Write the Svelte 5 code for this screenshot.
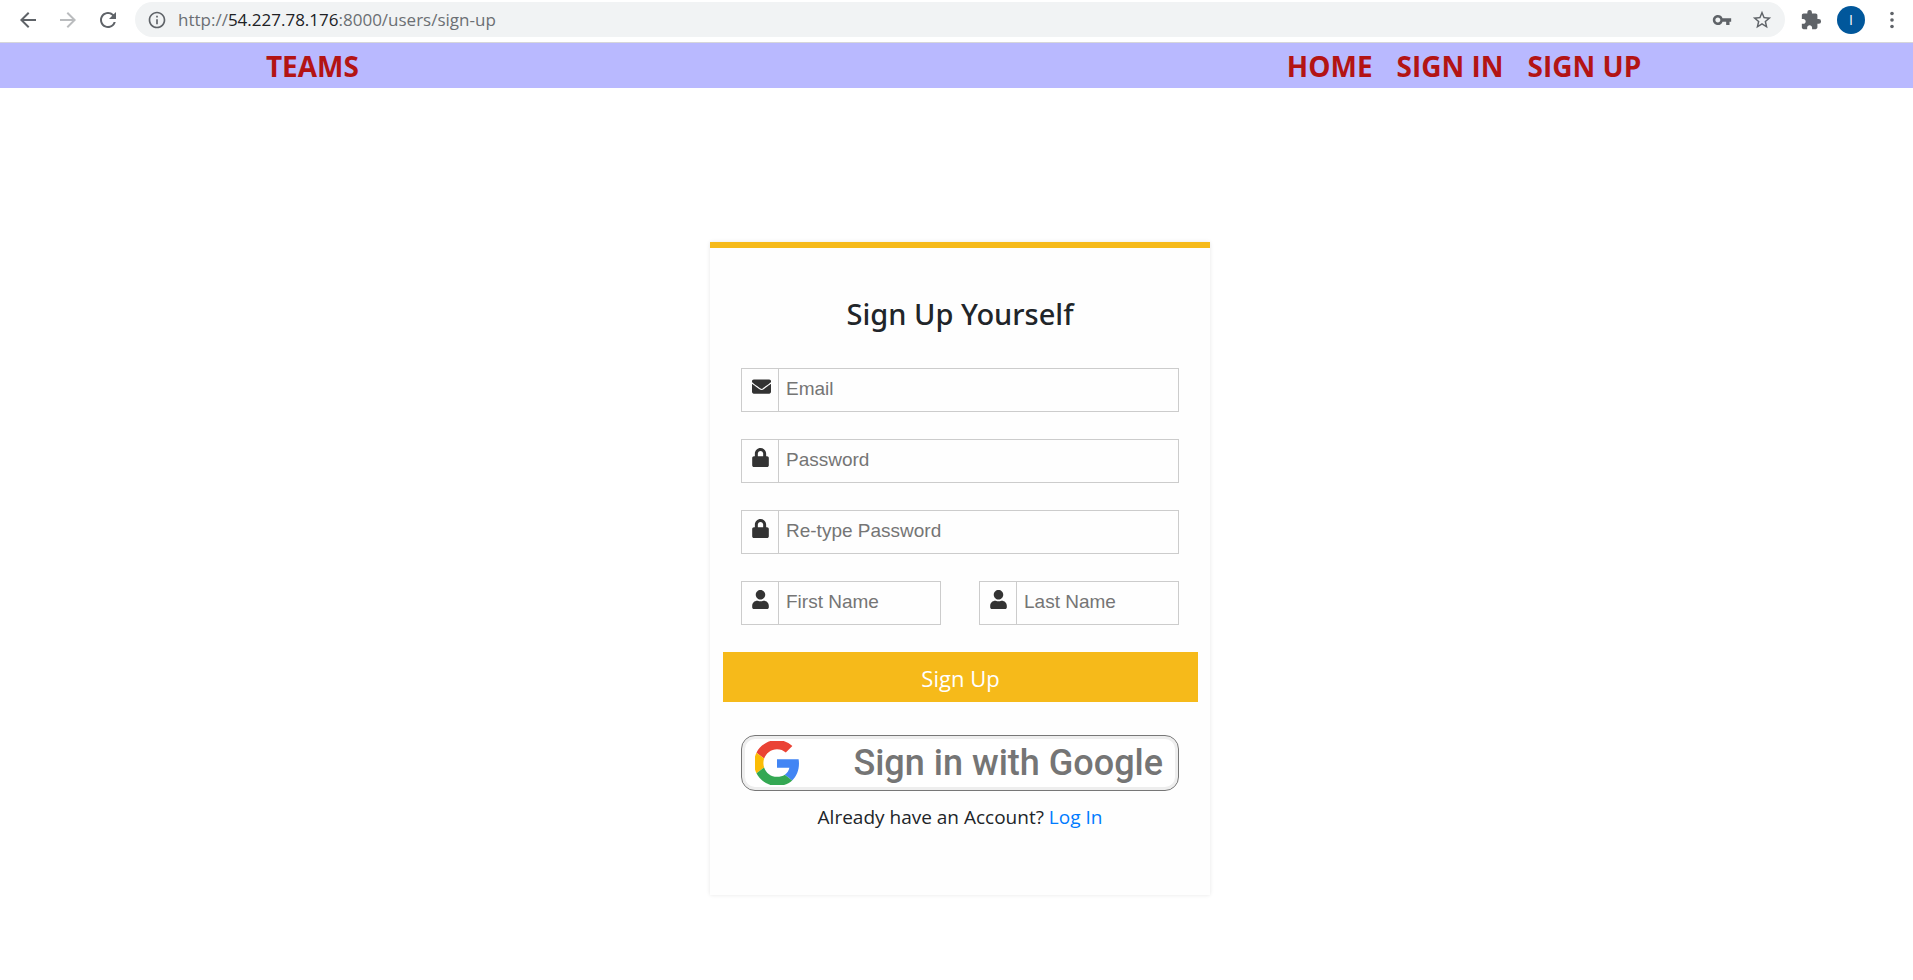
<script>
  let email = $state('');
  let password = $state('');
  let confirmation = $state('');
  let firstName = $state('');
  let lastName = $state('');
</script>

{#snippet envelope()}
  <svg class="field-icon" width="19" height="19" viewBox="0 0 512 512" aria-hidden="true">
    <path d="M502.3 190.8c3.9-3.1 9.7-.2 9.7 4.7V400c0 26.500-21.500 48-48 48H48c-26.500 0-48-21.500-48-48V195.600c0-5 5.700-7.800 9.700-4.700 22.400 17.400 52.100 39.500 154.100 113.600 21.100 15.400 56.700 47.800 92.200 47.600 35.700.3 72-32.800 92.300-47.600 102-74.100 131.600-96.300 154-113.700zM256 320c23.200.4 56.600-29.200 73.400-41.400 132.700-96.300 142.800-104.700 173.400-128.700 5.800-4.500 9.200-11.500 9.200-18.900v-19c0-26.500-21.500-48-48-48H48c-26.500 0-48 21.500-48 48v19c0 7.400 3.400 14.300 9.200 18.900 30.600 23.900 40.700 32.400 173.400 128.700 16.800 12.200 50.200 41.800 73.400 41.400z" />
  </svg>
{/snippet}

{#snippet lock()}
  <svg class="field-icon" width="17" height="19" viewBox="0 0 448 512" aria-hidden="true">
    <path d="M400 224h-24v-72C376 68.200 307.800 0 224 0S72 68.200 72 152v72H48c-26.500 0-48 21.500-48 48v192c0 26.500 21.500 48 48 48h352c26.500 0 48-21.500 48-48V272c0-26.500-21.500-48-48-48zm-104 0H152v-72c0-39.700 32.300-72 72-72s72 32.300 72 72v72z" />
  </svg>
{/snippet}

{#snippet user()}
  <svg class="field-icon" width="17" height="19" viewBox="0 0 448 512" aria-hidden="true">
    <path d="M224 256c70.700 0 128-57.300 128-128S294.700 0 224 0 96 57.300 96 128s57.300 128 128 128zm89.600 32h-16.700c-22.200 10.200-46.900 16-72.900 16s-50.600-5.800-72.900-16h-16.700C60.200 288 0 348.200 0 422.400V464c0 26.500 21.500 48 48 48h352c26.500 0 48-21.500 48-48v-41.600c0-74.200-60.200-134.400-134.400-134.400z" />
  </svg>
{/snippet}

<div class="toolbar">
  <div class="controls">
    <button aria-label="Back">
      <svg width="24" height="24" viewBox="0 0 24 24"><path d="M20 11H7.830l5.590-5.590L12 4l-8 8 8 8 1.410-1.410L7.830 13H20v-2z" /></svg>
    </button>
    <button class="disabled" aria-label="Forward">
      <svg width="24" height="24" viewBox="0 0 24 24"><path d="M12 4l-1.410 1.410L16.170 11H4v2h12.170l-5.580 5.590L12 20l8-8z" /></svg>
    </button>
    <button aria-label="Reload">
      <svg width="24" height="24" viewBox="0 0 24 24"><path d="M17.650 6.350A7.958 7.958 0 0 0 12 4c-4.420 0-7.990 3.580-7.990 8s3.570 8 7.990 8c3.730 0 6.840-2.550 7.730-6h-2.080A5.990 5.990 0 0 1 12 18c-3.310 0-6-2.690-6-6s2.690-6 6-6c1.660 0 3.140.69 4.220 1.780L13 11h7V4l-2.350 2.350z" /></svg>
    </button>
  </div>
  <div class="address">
    <svg width="20" height="20" viewBox="0 0 24 24" aria-hidden="true"><path d="M11 17h2v-6h-2v6zm1-15C6.480 2 2 6.480 2 12s4.480 10 10 10 10-4.480 10-10S17.520 2 12 2zm0 18c-4.410 0-8-3.590-8-8s3.590-8 8-8 8 3.590 8 8-3.590 8-8 8zM11 9h2V7h-2v2z" /></svg>
    <span class="url">http://<b>54.227.78.176</b>:8000/users/sign-up</span>
    <button aria-label="Saved passwords">
      <svg width="20" height="20" viewBox="0 0 24 24"><path d="M12.650 10A5.990 5.990 0 0 0 7 6c-3.310 0-6 2.690-6 6s2.690 6 6 6a5.990 5.990 0 0 0 5.650-4H17v4h4v-4h2v-4H12.650zM7 15c-1.650 0-3-1.350-3-3s1.350-3 3-3 3 1.350 3 3-1.350 3-3 3z" /></svg>
    </button>
    <button aria-label="Bookmark this page">
      <svg width="22" height="22" viewBox="0 0 24 24"><path d="M22 9.240l-7.190-.62L12 2 9.190 8.630 2 9.240l5.460 4.730L5.820 21 12 17.270 18.180 21l-1.630-7.030L22 9.240zM12 15.400l-3.760 2.270 1-4.280-3.320-2.880 4.380-.38L12 6.100l1.710 4.040 4.380.38-3.320 2.880 1 4.280L12 15.400z" /></svg>
    </button>
  </div>
  <div class="extras">
    <button aria-label="Extensions">
      <svg width="22" height="22" viewBox="0 0 24 24"><path d="M20.500 11H19V7c0-1.100-.9-2-2-2h-4V3.500a2.500 2.500 0 0 0-5 0V5H4c-1.100 0-1.990.9-1.990 2v3.800H3.500c1.490 0 2.700 1.210 2.700 2.700s-1.210 2.700-2.700 2.700H2V20c0 1.100.9 2 2 2h3.800v-1.500c0-1.490 1.210-2.700 2.700-2.700s2.700 1.210 2.700 2.700V22H17c1.100 0 2-.9 2-2v-4h1.500a2.500 2.500 0 0 0 0-5z" /></svg>
    </button>
    <button class="avatar" aria-label="Profile">I</button>
    <button aria-label="Menu">
      <svg width="24" height="24" viewBox="0 0 24 24"><circle cx="12" cy="5.500" r="1.800" /><circle cx="12" cy="12" r="1.800" /><circle cx="12" cy="18.500" r="1.800" /></svg>
    </button>
  </div>
</div>

<nav>
  <a href="#teams">TEAMS</a>
  <div class="links">
    <a href="#home">HOME</a>
    <a href="#sign-in">SIGN IN</a>
    <a href="#sign-up">SIGN UP</a>
  </div>
</nav>

<main>
  <section class="card">
    <h1>Sign Up Yourself</h1>
    <form onsubmit={(event) => event.preventDefault()}>
      <label class="field">
        <span class="cell">{@render envelope()}</span>
        <input type="email" placeholder="Email" aria-label="Email" bind:value={email} />
      </label>
      <label class="field">
        <span class="cell">{@render lock()}</span>
        <input type="password" placeholder="Password" aria-label="Password" bind:value={password} />
      </label>
      <label class="field">
        <span class="cell">{@render lock()}</span>
        <input type="password" placeholder="Re-type Password" aria-label="Re-type Password" bind:value={confirmation} />
      </label>
      <div class="names">
        <label class="field">
          <span class="cell">{@render user()}</span>
          <input type="text" placeholder="First Name" aria-label="First Name" bind:value={firstName} />
        </label>
        <label class="field">
          <span class="cell">{@render user()}</span>
          <input type="text" placeholder="Last Name" aria-label="Last Name" bind:value={lastName} />
        </label>
      </div>
      <button class="submit" type="submit">Sign Up</button>
    </form>
    <button class="google" type="button">
      <svg width="44" height="44" viewBox="1 1 46 46" aria-hidden="true">
        <path fill="#EA4335" d="M24 9.500c3.540 0 6.710 1.220 9.210 3.600l6.850-6.850C35.900 2.380 30.470 0 24 0 14.620 0 6.510 5.380 2.560 13.220l7.980 6.190C12.430 13.720 17.740 9.500 24 9.500z" />
        <path fill="#4285F4" d="M46.980 24.550c0-1.570-.15-3.090-.38-4.550H24v9.020h12.940c-.58 2.960-2.260 5.480-4.780 7.180l7.730 6c4.510-4.180 7.090-10.360 7.090-17.650z" />
        <path fill="#FBBC05" d="M10.530 28.590c-.48-1.450-.76-2.990-.76-4.590s.27-3.140.76-4.590l-7.980-6.190C.92 16.460 0 20.120 0 24c0 3.880.92 7.540 2.560 10.780l7.970-6.190z" />
        <path fill="#34A853" d="M24 48c6.480 0 11.930-2.130 15.890-5.810l-7.730-6c-2.150 1.450-4.920 2.300-8.160 2.300-6.260 0-11.570-4.220-13.470-9.910l-7.980 6.190C6.510 42.620 14.620 48 24 48z" />
      </svg>
      <span>Sign in with Google</span>
    </button>
    <p>Already have an Account? <a href="#log-in">Log In</a></p>
  </section>
</main>

<style>
  :global(body) {
    background: #fff;
    font-family: 'Open Sans', 'Noto Sans', sans-serif;
    color: #212529;
  }

  button {
    display: flex;
    align-items: center;
    justify-content: center;
    padding: 0;
    border: 0;
    background: none;
    font-family: inherit;
    cursor: pointer;
  }

  a {
    text-decoration: none;
  }

  .toolbar {
    display: flex;
    align-items: center;
    gap: 15px;
    padding: 2px 9px 5px 16px;
    border-bottom: 1px solid #d6d6da;
    background: #fff;
  }

  .toolbar svg {
    display: block;
    fill: #5f6368;
  }

  .controls {
    display: flex;
    gap: 16px;
  }

  .controls .disabled svg {
    fill: #babcbe;
  }

  .address {
    display: flex;
    flex: 1;
    align-items: center;
    gap: 19px;
    height: 35px;
    padding: 0 12px;
    border-radius: 18px;
    background: #f1f3f4;
  }

  .url {
    flex: 1;
    margin-left: -8px;
    font-size: 17px;
    color: #6b6f73;
  }

  .url b {
    font-weight: 400;
    color: #202124;
  }

  .extras {
    display: flex;
    align-items: center;
    gap: 15px;
  }

  .avatar {
    width: 28px;
    height: 28px;
    border-radius: 50%;
    background: #01579b;
    color: #fff;
    font-size: 14px;
  }

  nav {
    display: flex;
    justify-content: space-between;
    padding: 2px 14.2% 0 13.9%;
    background: #b9b9ff;
    font-size: 28px;
    font-weight: 700;
    line-height: 43px;
  }

  nav a {
    color: #b31414;
  }

  .links {
    display: flex;
    gap: 24px;
  }

  main {
    display: flex;
    justify-content: center;
    padding: 154px 0 84px 7px;
  }

  .card {
    box-sizing: border-box;
    width: 100%;
    max-width: 500px;
    padding: 46px 31px 64px;
    border-top: 6px solid #f6ba1a;
    background: #fefefe;
    box-shadow: 0 0 4px rgba(0, 0, 0, 0.1);
  }

  h1 {
    margin: 0 0 34px;
    font-family: 'Noto Sans', 'Open Sans', sans-serif;
    font-size: 29px;
    font-weight: 500;
    line-height: 40px;
    text-align: center;
  }

  form {
    display: flex;
    flex-direction: column;
    gap: 27px;
  }

  .field {
    display: flex;
    box-sizing: border-box;
    flex: 1;
    min-width: 0;
    border: 1px solid #ccc;
  }

  .cell {
    box-sizing: border-box;
    width: 37px;
    padding: 8px 0 0 10px;
    border-right: 1px solid #ccc;
  }

  .field-icon {
    display: block;
    fill: #333;
  }

  .field input {
    flex: 1;
    min-width: 0;
    height: 42px;
    box-sizing: border-box;
    padding: 0 7px 2px;
    border: 0;
    outline: 0;
    background: none;
    font-family: 'Liberation Sans', Arial, sans-serif;
    font-size: 19px;
    color: #333;
  }

  .field input::placeholder {
    color: #757575;
    opacity: 1;
  }

  .names {
    display: flex;
    gap: 38px;
  }

  .submit {
    height: 50px;
    margin: 0 -19px 0 -18px;
    padding-top: 2px;
    background: #f6ba1a;
    color: #fff;
    font-size: 22px;
  }

  .google {
    justify-content: space-between;
    box-sizing: border-box;
    width: 100%;
    height: 56px;
    margin-top: 33px;
    padding: 0 15px 0 13px;
    border: 1px solid #777;
    border-radius: 14px;
    background: #fff;
    box-shadow: inset 0 0 0 3px #eee;
    color: #757575;
    font-family: Roboto, sans-serif;
    font-size: 36px;
    font-weight: 500;
  }

  p {
    margin: 12px 0 0;
    font-size: 19px;
    line-height: 28px;
    text-align: center;
  }

  p a {
    color: #007bff;
  }
</style>
